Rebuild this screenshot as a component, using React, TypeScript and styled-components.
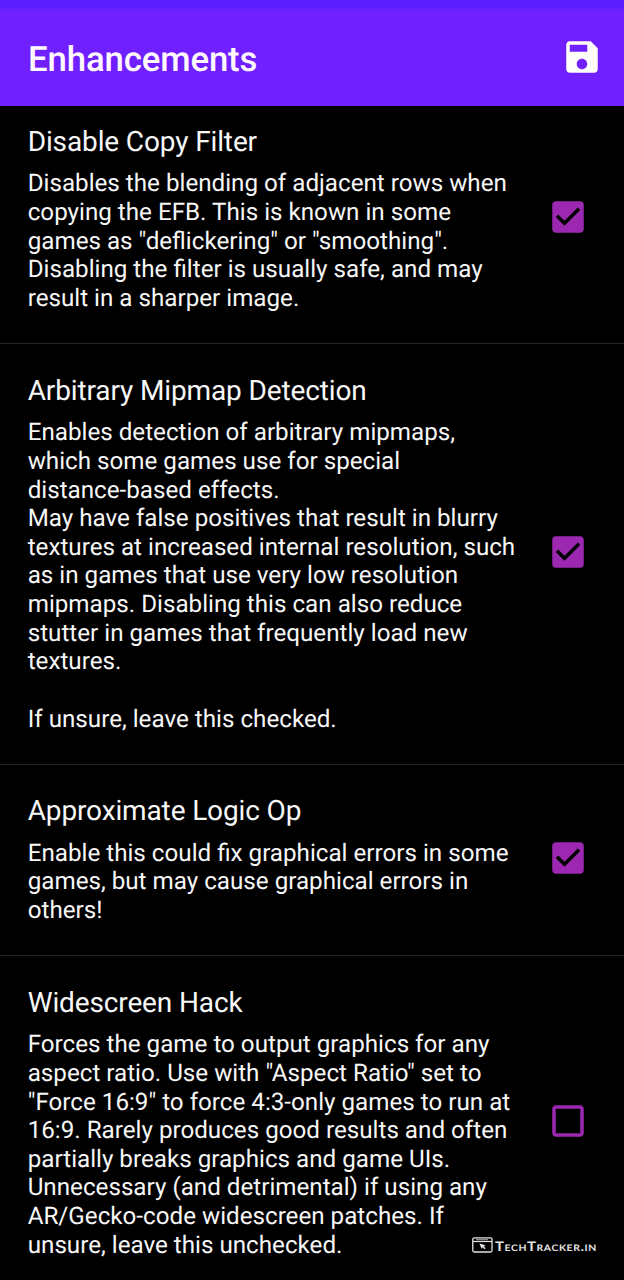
import React from "react";
import styled, { createGlobalStyle } from "styled-components";

const GlobalStyle = createGlobalStyle`
  * { box-sizing: border-box; }
  body { margin: 0; background: #000; overflow: hidden; }
`;

const Screen = styled.div`
  position: relative;
  width: 624px;
  height: 1280px;
  overflow: hidden;
  display: flex;
  flex-direction: column;
  background: #000;
  color: #f7f7f7;
  font-family: Roboto, "Liberation Sans", sans-serif;
  text-rendering: geometricPrecision;
`;

const StatusBar = styled.div`
  flex: none;
  height: 10px;
  background: linear-gradient(#5a1fff 75%, #701fff);
`;

const Toolbar = styled.header`
  flex: none;
  height: 96px;
  padding: 0 21px 0 28px;
  display: flex;
  align-items: center;
  justify-content: space-between;
  background: #701fff;
`;

const ToolbarTitle = styled.h1`
  margin: 4px 0 0;
  font-size: 34.8px;
  line-height: 42px;
  font-weight: 500;
  letter-spacing: -0.15px;
  color: #fff8ff;
`;

const SaveButton = styled.button`
  display: flex;
  margin-bottom: 2px;
  padding: 0;
  border: 0;
  background: none;
  color: #fffdfa;
`;

const SettingRow = styled.section<{ $first?: boolean }>`
  flex: none;
  display: flex;
  align-items: center;
  justify-content: space-between;
  margin-top: ${(p) => (p.$first ? "-10.8px" : "0")};
  padding: 29.6px 34.6px 30.4px 27.7px;
  border-bottom: 1.5px solid #242424;
`;

const List = styled.main`
  flex: 1;
  overflow: hidden;
`;

const SettingTitle = styled.h2`
  margin: 0 0 10.7px;
  font-size: 28px;
  line-height: 34px;
  font-weight: 400;
  letter-spacing: -0.13px;
`;

const Description = styled.p`
  margin: 0;
  font-size: 24.2px;
  line-height: 28.62px;
`;

const Line = styled.span`
  display: block;
  width: fit-content;
  min-height: 28.62px;
  white-space: pre;
`;

const CheckSvg = styled.svg`
  flex: none;
  display: block;
  width: 42px;
  height: 42px;
  margin-bottom: 3px;
  fill: #9c27b0;
`;

const Watermark = styled.div`
  position: absolute;
  left: 472px;
  top: 1236.5px;
  display: flex;
  align-items: center;
  gap: 2px;
  color: #e4e4e4;
`;

const Brand = styled.span`
  padding-top: 1px;
  font-family: Lato, "Open Sans", sans-serif;
  font-weight: 700;
  font-size: 13px;
  line-height: 16px;
  font-variant-caps: small-caps;
  letter-spacing: 0.5px;
  transform: scaleX(1.155);
  transform-origin: left center;
`;

const settings = [
  {
    title: "Disable Copy Filter",
    checked: true,
    lines: [
      "Disables the blending of adjacent rows when",
      "copying the EFB. This is known in some",
      'games as "deflickering" or "smoothing".',
      "Disabling the filter is usually safe, and may",
      "result in a sharper image.",
    ],
  },
  {
    title: "Arbitrary Mipmap Detection",
    checked: true,
    lines: [
      "Enables detection of arbitrary mipmaps,",
      "which some games use for special",
      "distance-based effects.",
      "May have false positives that result in blurry",
      "textures at increased internal resolution, such",
      "as in games that use very low resolution",
      "mipmaps. Disabling this can also reduce",
      "stutter in games that frequently load new",
      "textures.",
      "",
      "If unsure, leave this checked.",
    ],
  },
  {
    title: "Approximate Logic Op",
    checked: true,
    lines: [
      "Enable this could fix graphical errors in some",
      "games, but may cause graphical errors in",
      "others!",
    ],
  },
  {
    title: "Widescreen Hack",
    checked: false,
    lines: [
      "Forces the game to output graphics for any",
      'aspect ratio. Use with "Aspect Ratio" set to',
      '"Force 16:9" to force 4:3-only games to run at',
      "16:9. Rarely produces good results and often",
      "partially breaks graphics and game UIs.",
      "Unnecessary (and detrimental) if using any",
      "AR/Gecko-code widescreen patches. If",
      "unsure, leave this unchecked.",
    ],
  },
];

const Checkbox = ({ checked }: { checked: boolean }) => (
  <CheckSvg viewBox="0 0 24 24" role="checkbox" aria-checked={checked}>
    {checked ? (
      <path d="M19 3H5c-1.1 0-2 .9-2 2v14c0 1.1.9 2 2 2h14c1.1 0 2-.9 2-2V5c0-1.1-.9-2-2-2zM10 17l-5-5 1.41-1.41L10 14.17l7.59-7.59L19 8z" />
    ) : (
      <path d="M19 5v14H5V5h14m0-2H5c-1.1 0-2 .9-2 2v14c0 1.1.9 2 2 2h14c1.1 0 2-.9 2-2V5c0-1.1-.9-2-2-2z" />
    )}
  </CheckSvg>
);

export default function App() {
  return (
    <Screen>
      <GlobalStyle />
      <StatusBar />
      <Toolbar>
        <ToolbarTitle>Enhancements</ToolbarTitle>
        <SaveButton aria-label="Save">
          <svg width="42" height="42" viewBox="0 0 24 24" fill="currentColor">
            <path d="M17 3H5c-1.11 0-2 .9-2 2v14c0 1.1.89 2 2 2h14c1.1 0 2-.9 2-2V7l-4-4zm-5 16c-1.66 0-3-1.34-3-3s1.34-3 3-3 3 1.34 3 3-1.34 3-3 3zm3-10H5V5h10v4z" />
          </svg>
        </SaveButton>
      </Toolbar>
      <List>
        {settings.map((s, i) => (
          <SettingRow key={s.title} $first={i === 0}>
            <div>
              <SettingTitle>{s.title}</SettingTitle>
              <Description>
                {s.lines.map((line, n) => (
                  <Line key={n}>{line}</Line>
                ))}
              </Description>
            </div>
            <Checkbox checked={s.checked} />
          </SettingRow>
        ))}
      </List>
      <Watermark>
        <svg width="21" height="16" viewBox="0 0 21 16" fill="none" stroke="currentColor">
          <rect x="0.8" y="0.8" width="19.2" height="14.2" rx="1.5" strokeWidth="1.3" />
          <path d="M1 4.5H20" strokeWidth="1.2" />
          <path d="M4 2.6H16" strokeWidth="1.4" opacity="0.6" />
          <path d="M7.5 6.5L13.5 8.3L11.8 9.3L13.6 11.3L12.4 12.3L10.6 10.2L9.5 11.8Z" fill="currentColor" stroke="none" />
        </svg>
        <Brand>TechTracker.in</Brand>
      </Watermark>
    </Screen>
  );
}
